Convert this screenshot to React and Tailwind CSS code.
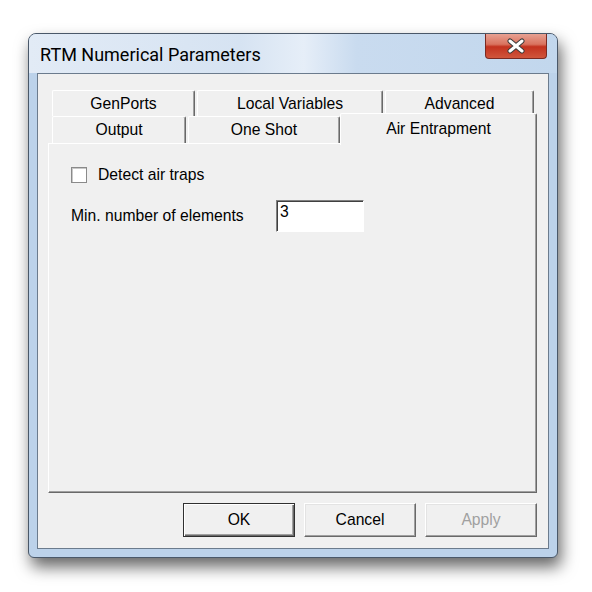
import { useState } from 'react'

const TOP_TABS = [
  { label: 'GenPorts', w: 'w-[143px]' },
  { label: 'Local Variables', w: 'w-[186px]' },
  { label: 'Advanced', w: 'w-[149px]' },
]

const FRONT_TABS = [
  { label: 'Output', w: 'w-[134px]' },
  { label: 'One Shot', w: 'w-[152px]' },
]

function Tab({ label, w }) {
  return (
    <div
      className={`${w} h-full flex items-center justify-center bg-[#f0f0f0] border-l border-t border-white border-r border-r-[#696969] rounded-t-[2px] shadow-[inset_-1px_0_0_#a0a0a0] text-[15.7px] text-black`}
    >
      {label}
    </div>
  )
}

function Button({ children, isDefault, disabled }) {
  return (
    <button
      className={`w-[112px] h-[34px] bg-[#f0f0f0] text-[15.7px] border ${
        isDefault
          ? 'border-[#303030] shadow-[inset_1px_1px_0_#ffffff,inset_-1px_-1px_0_#696969,inset_-2px_-2px_0_#a0a0a0]'
          : 'border-t-white border-l-white border-r-[#696969] border-b-[#696969] shadow-[inset_-1px_-1px_0_#a0a0a0,inset_1px_1px_0_#e3e3e3]'
      } ${disabled ? 'text-[#a0a0a0]' : 'text-black'}`}
    >
      {children}
    </button>
  )
}

export default function App() {
  const [detect, setDetect] = useState(false)
  const [minElems, setMinElems] = useState('3')

  return (
    <div className="w-[592px] h-[592px] bg-white pt-[33px] pl-[28px] font-['Liberation_Sans',Arial,sans-serif]">
      <div className="w-[530px] h-[525px] flex flex-col border border-[#4a5869] rounded-t-[8px] rounded-b-[6px] bg-[#bcd2ea] shadow-[3px_9px_16px_rgba(0,0,0,0.6)] overflow-hidden">
        {/* title bar */}
        <div className="h-[39px] shrink-0 flex items-start bg-[linear-gradient(90deg,#e2ebf6_0%,#d6e3f2_40%,#e6eef8_52%,#c9dbef_62%,#c2d7ed_100%)]">
          <div className="pl-[11px] pt-[7px] flex-1 text-[18px] text-black font-['Roboto',sans-serif]">
            RTM Numerical Parameters
          </div>
          <div className="mr-[10px] -mt-px w-[62px] h-[26px] rounded-b-[4px] border border-[#7a2a22] border-t-0 bg-[linear-gradient(180deg,#e9a597_0%,#d9735f_45%,#c3321f_55%,#d0553b_100%)] flex items-center justify-center">
            <svg width="20" height="16" viewBox="0 0 20 16">
              <path d="M4 3 L16 13 M16 3 L4 13" stroke="#3b3b3b" strokeWidth="5" strokeLinecap="round" />
              <path d="M4 3 L16 13 M16 3 L4 13" stroke="#ffffff" strokeWidth="3" strokeLinecap="round" />
            </svg>
          </div>
        </div>

        {/* client area */}
        <div className="mx-[8px] h-[476px] border border-[#6b7b8d] bg-[#f0f0f0] flex flex-col pt-[16px]">
          <div className="ml-[14px] h-[26px] flex gap-[2px]">
            {TOP_TABS.map((t) => (
              <Tab key={t.label} {...t} />
            ))}
          </div>
          <div className="ml-[14px] -mt-[3px] h-[30px] flex items-end relative z-10">
            <div className="h-[27px] flex gap-[2px]">
              {FRONT_TABS.map((t) => (
                <Tab key={t.label} {...t} />
              ))}
            </div>
            <div className="w-[197px] h-[32px] -mb-[2px] bg-[#f0f0f0] border-l border-t border-white border-r border-r-[#696969] rounded-t-[2px] shadow-[inset_-1px_0_0_#a0a0a0] flex justify-center pt-[3px] text-[15.7px] text-black">
              Air Entrapment
            </div>
          </div>

          {/* panel */}
          <div className="ml-[10px] w-[489px] h-[350px] border-l border-t border-white border-r border-b border-r-[#696969] border-b-[#696969] shadow-[inset_-1px_-1px_0_#a0a0a0] pl-[22px] pt-[22px] text-[15.7px] text-black">
            <label className="flex items-center gap-[11px] h-[18px]">
              <span
                onClick={() => setDetect(!detect)}
                className="w-[16px] h-[16px] bg-white border border-[#8a8a8a] shadow-[inset_1px_1px_0_#c8c8c8] flex items-center justify-center text-[12px] leading-none"
              >
                {detect ? '✓' : ''}
              </span>
              <span>Detect air traps</span>
            </label>
            <div className="mt-[16px] flex items-center h-[32px]">
              <span className="w-[205px]">Min. number of elements</span>
              <input
                value={minElems}
                onChange={(e) => setMinElems(e.target.value)}
                className="w-[88px] h-[32px] bg-white border border-t-[#808080] border-l-[#808080] border-r-white border-b-white shadow-[inset_1px_1px_0_#404040] pl-[3px] pb-[8px] text-[15.7px] outline-none"
              />
            </div>
          </div>

          {/* buttons */}
          <div className="mt-[10px] ml-[10px] w-[489px] flex justify-end gap-[9px]">
            <Button isDefault>OK</Button>
            <Button>Cancel</Button>
            <Button disabled>Apply</Button>
          </div>
        </div>
      </div>
    </div>
  )
}
